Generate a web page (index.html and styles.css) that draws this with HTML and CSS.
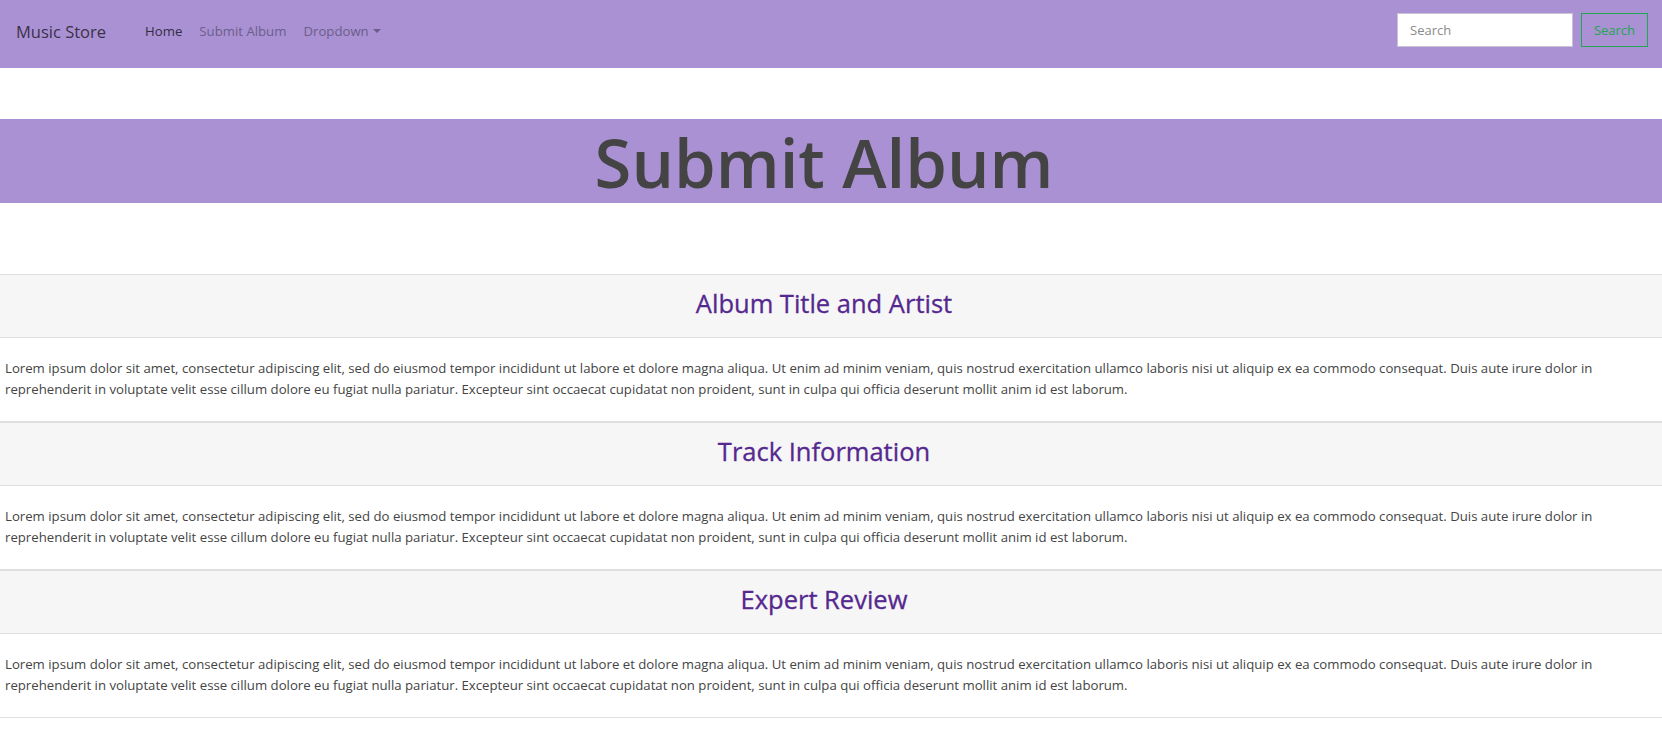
FILE: index.html
```html
<!DOCTYPE html>
<html lang="en">
<head>
<meta charset="utf-8">
<title>Submit Album</title>
<link rel="stylesheet" href="styles.css">
</head>
<body>
<nav class="navbar">
  <a class="brand" href="#">Music Store</a>
  <ul class="nav-links">
    <li><a class="nav-link active" href="#">Home</a></li>
    <li><a class="nav-link" href="#">Submit Album</a></li>
    <li><a class="nav-link dropdown" href="#">Dropdown<span class="caret"></span></a></li>
  </ul>
  <form class="search">
    <input class="search-input" type="text" placeholder="Search">
    <button class="search-btn" type="button">Search</button>
  </form>
</nav>

<h1 class="page-title">Submit Album</h1>

<main class="cards">
  <section class="card">
    <header class="card-header"><h3>Album Title and Artist</h3></header>
    <div class="card-body"><p>Lorem ipsum dolor sit amet, consectetur adipiscing elit, sed do eiusmod tempor incididunt ut labore et dolore magna aliqua. Ut enim ad minim veniam, quis nostrud exercitation ullamco laboris nisi ut aliquip ex ea commodo consequat. Duis aute irure dolor in reprehenderit in voluptate velit esse cillum dolore eu fugiat nulla pariatur. Excepteur sint occaecat cupidatat non proident, sunt in culpa qui officia deserunt mollit anim id est laborum.</p></div>
  </section>
  <section class="card">
    <header class="card-header"><h3>Track Information</h3></header>
    <div class="card-body"><p>Lorem ipsum dolor sit amet, consectetur adipiscing elit, sed do eiusmod tempor incididunt ut labore et dolore magna aliqua. Ut enim ad minim veniam, quis nostrud exercitation ullamco laboris nisi ut aliquip ex ea commodo consequat. Duis aute irure dolor in reprehenderit in voluptate velit esse cillum dolore eu fugiat nulla pariatur. Excepteur sint occaecat cupidatat non proident, sunt in culpa qui officia deserunt mollit anim id est laborum.</p></div>
  </section>
  <section class="card">
    <header class="card-header"><h3>Expert Review</h3></header>
    <div class="card-body"><p>Lorem ipsum dolor sit amet, consectetur adipiscing elit, sed do eiusmod tempor incididunt ut labore et dolore magna aliqua. Ut enim ad minim veniam, quis nostrud exercitation ullamco laboris nisi ut aliquip ex ea commodo consequat. Duis aute irure dolor in reprehenderit in voluptate velit esse cillum dolore eu fugiat nulla pariatur. Excepteur sint occaecat cupidatat non proident, sunt in culpa qui officia deserunt mollit anim id est laborum.</p></div>
  </section>
</main>
</body>
</html>
```

FILE: styles.css
```css
* { box-sizing: border-box; }

html, body {
  margin: 0;
  padding: 0;
}

body {
  font-family: "Open Sans", "Noto Sans", sans-serif;
  font-size: 13.2px;
  line-height: 21px;
  color: #444;
  background: #fff;
}

a { text-decoration: none; }

.navbar {
  display: flex;
  align-items: center;
  height: 68px;
  padding: 0 14px 0 16px;
  background: #aa91d3;
}

.brand {
  font-size: 16.5px;
  color: #3a3149;
  margin-right: 32px;
  line-height: 24px;
  margin-top: -4px;
}

.nav-links {
  display: flex;
  list-style: none;
  margin: 0;
  padding: 0;
  gap: 3px;
  flex: 1;
  margin-top: -6px;
}

.nav-link {
  display: inline-flex;
  align-items: center;
  padding: 0 7px;
  font-size: 13.2px;
  color: #6c5e8a;
}

.nav-link.active { color: #342c45; }

.caret {
  display: inline-block;
  width: 0;
  height: 0;
  margin-left: 4px;
  border-top: 4.5px solid #6c5e8a;
  border-left: 4.5px solid transparent;
  border-right: 4.5px solid transparent;
}

.search {
  display: flex;
  align-items: center;
  gap: 8px;
  margin-top: -8px;
}

.search-input {
  width: 176px;
  height: 34px;
  padding: 0 12px;
  border: 1px solid #c8c2d2;
  background: #fff;
  font-family: inherit;
  font-size: 13px;
  color: #444;
  outline: none;
}

.search-input::placeholder { color: #8a8a8a; }

.search-btn {
  width: 67px;
  height: 34px;
  padding: 0;
  border: 1px solid #22a652;
  background: transparent;
  font-family: inherit;
  font-size: 13px;
  color: #22a652;
}

.page-title {
  margin: 51px 0 71px;
  padding: 3px 14px 0 0;
  height: 84px;
  background: #aa91d3;
  color: #444;
  text-align: center;
  font-size: 67px;
  font-weight: 600;
  line-height: 81px;
}

.cards {
  display: flex;
  flex-direction: column;
}

.card {
  border-top: 1px solid #dfdfdf;
  border-bottom: 1px solid #dfdfdf;
}

.card-header {
  display: flex;
  align-items: center;
  justify-content: center;
  height: 63px;
  padding: 0 14px 6px 0;
  background: #f6f6f6;
  border-bottom: 1px solid #dfdfdf;
}

.card-header h3 {
  margin: 0;
  font-size: 25.5px;
  font-weight: 500;
  line-height: 30px;
  color: #55288f;
  -webkit-text-stroke: 0.3px #55288f;
}

.card-body {
  padding: 20px 5px 21px;
}

.card-body p {
  margin: 0;
}
```
